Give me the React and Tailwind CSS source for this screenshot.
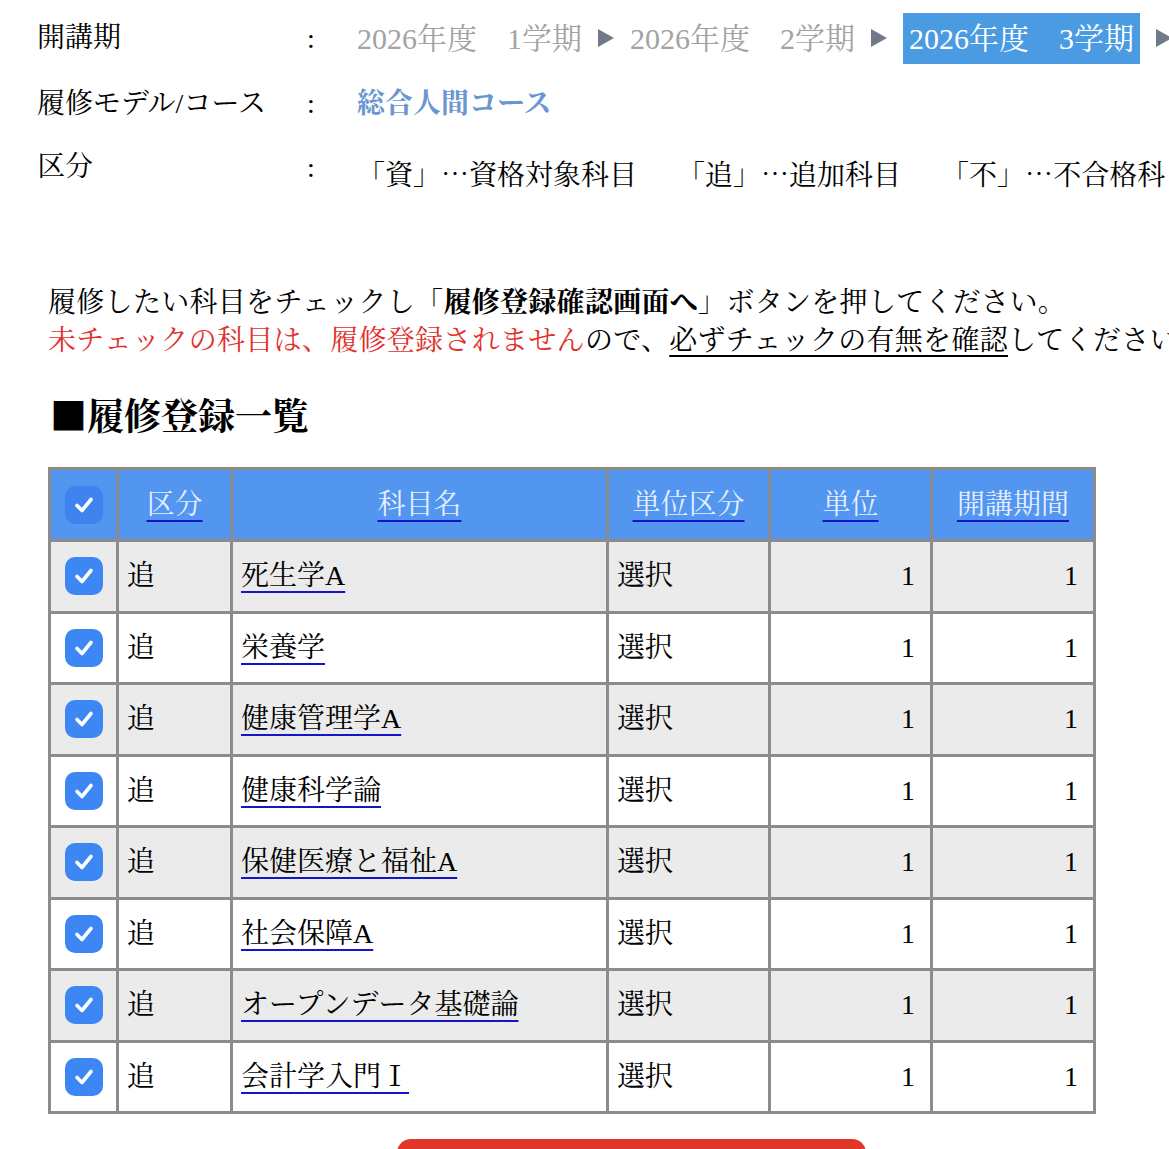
import { Fragment } from 'react'

const FONT = { fontFamily: '"Liberation Serif", "Noto Serif CJK JP", "Noto Sans CJK JP", serif' }

const terms = [
  { label: '2026年度　1学期', active: false },
  { label: '2026年度　2学期', active: false },
  { label: '2026年度　3学期', active: true },
]

const courses = [
  '死生学A',
  '栄養学',
  '健康管理学A',
  '健康科学論',
  '保健医療と福祉A',
  '社会保障A',
  'オープンデータ基礎論',
  '会計学入門Ⅰ',
]

const headers = ['区分', '科目名', '単位区分', '単位', '開講期間']

// full-width glyphs (centered ellipsis, big square) come from the CJK face
const cjk = "font-['Noto_Serif_CJK_JP','Noto_Sans_CJK_JP',serif]"

function Arrow() {
  return (
    <svg width="18" height="20" viewBox="0 0 18 20" className="mx-[15px] shrink-0">
      <path d="M1 1 L17 10 L1 19 Z" fill="#717a8a" />
    </svg>
  )
}

function CheckBox({ dark }) {
  return (
    <div className={`mx-auto flex h-[38px] w-[38px] items-center justify-center rounded-[10px] ${dark ? 'bg-[#3f83ee]' : 'bg-[#3c87f4]'}`}>
      <svg width="24" height="24" viewBox="0 0 24 24" fill="none">
        <path d="M5 12.5 L10 17.5 L19 6.5" stroke="white" strokeWidth="3.6" strokeLinecap="round" strokeLinejoin="round" />
      </svg>
    </div>
  )
}

function InfoRow({ label, children, className = 'h-[66px] items-center', colon = '' }) {
  return (
    <div className={`flex ${className}`}>
      <div className="w-[270px] shrink-0">{label}</div>
      <div className={`w-[50px] shrink-0 ${colon}`}>:</div>
      {children}
    </div>
  )
}

export default function App() {
  return (
    <div className="h-[1149px] w-[1169px] overflow-hidden bg-white text-black whitespace-nowrap" style={FONT}>
      {/* Registration info */}
      <div className="pl-[37px] pt-[5px] text-[28px]">
        <InfoRow label="開講期" colon="pt-[1px]">
          <div className="flex shrink-0 items-center text-[30px]">
            {terms.map((t) => (
              <Fragment key={t.label}>
                {t.active ? (
                  <span className="bg-[#4b9be2] px-[6px] py-[3px] text-white">{t.label}</span>
                ) : (
                  <span className="text-[#a3a3a3]">{t.label}</span>
                )}
                <Arrow />
              </Fragment>
            ))}
          </div>
        </InfoRow>
        <InfoRow label="履修モデル/コース">
          <div className="font-bold text-[#6b96d0]">総合人間コース</div>
        </InfoRow>
        <InfoRow label="区分" className="h-[60px] items-center" colon="self-start pt-[10px]">
          <div className="flex shrink-0 gap-[40px] pt-[14px]">
            <span>「資」<span className={cjk}>…</span>資格対象科目</span>
            <span>「追」<span className={cjk}>…</span>追加科目</span>
            <span>「不」<span className={cjk}>…</span>不合格科目</span>
          </div>
        </InfoRow>
      </div>

      {/* Instructions */}
      <div className="mt-[87px] pl-[48px] text-[28px] leading-[38px] tracking-[0.3px]">
        <p>
          履修したい科目をチェックし「<span className="font-bold">履修登録確認画面へ</span>」ボタンを押してください。
        </p>
        <p>
          <span className="text-[#e2302d]">未チェックの科目は、履修登録されません</span>ので、
          <span className="underline decoration-2 underline-offset-[5px]">必ずチェックの有無を確認</span>してください。
        </p>
      </div>

      <h2 className="mt-[29px] h-[50px] pl-[50px] text-[37px] font-bold leading-[50px]">
        <span className={cjk}>■</span>履修登録一覧
      </h2>

      {/* Course table */}
      <table className="ml-[48px] mt-[28px] w-[1045px] table-fixed border-collapse border-[3px] border-[#8c8c8c] text-[28px]">
        <colgroup>
          <col className="w-[68px]" />
          <col className="w-[114px]" />
          <col className="w-[376px]" />
          <col className="w-[162px]" />
          <col className="w-[162px]" />
          <col className="w-[163px]" />
        </colgroup>
        <thead>
          <tr className="h-[72px] bg-[#5296f0]">
            <th className="border-[3px] border-[#8c8c8c]">
              <CheckBox dark />
            </th>
            {headers.map((h) => (
              <th key={h} className="border-[3px] border-[#8c8c8c] font-normal">
                <a className="text-[#e6eeff] underline decoration-[#1414c8] decoration-2 underline-offset-[6px]">{h}</a>
              </th>
            ))}
          </tr>
        </thead>
        <tbody>
          {courses.map((name, i) => (
            <tr key={name} className={`h-[71.5px] ${i % 2 === 0 ? 'bg-[#ebebeb]' : 'bg-white'}`}>
              <td className="border-[3px] border-[#8c8c8c]">
                <CheckBox />
              </td>
              <td className="border-[3px] border-[#8c8c8c] pl-[8px]">追</td>
              <td className="border-[3px] border-[#8c8c8c] pl-[8px]">
                <a className="underline decoration-[#1414c8] decoration-2 underline-offset-[6px]">{name}</a>
              </td>
              <td className="border-[3px] border-[#8c8c8c] pl-[8px]">選択</td>
              <td className="border-[3px] border-[#8c8c8c] pr-[15px] text-right">1</td>
              <td className="border-[3px] border-[#8c8c8c] pr-[15px] text-right">1</td>
            </tr>
          ))}
        </tbody>
      </table>

      <button className="ml-[397px] mt-[25px] block h-[48px] w-[469px] rounded-[14px] bg-[#e2362b]" />
    </div>
  )
}
